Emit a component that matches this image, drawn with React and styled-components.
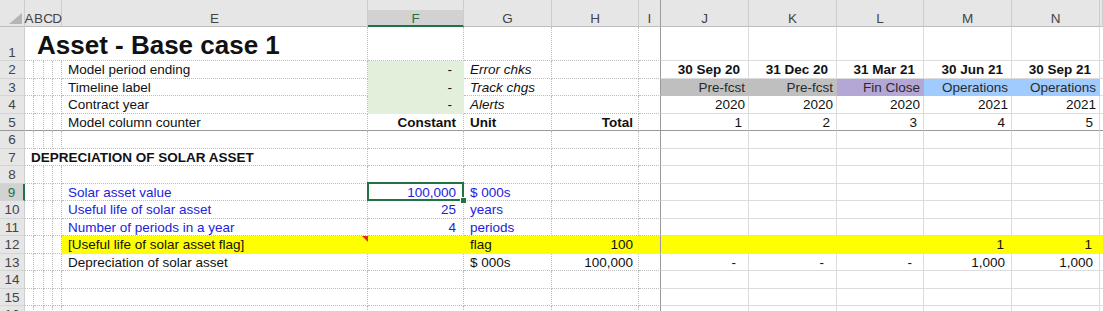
import React from "react";
import styled, { createGlobalStyle, css } from "styled-components";

const GlobalStyle = createGlobalStyle`
  html, body { margin: 0; padding: 0; background: #ffffff; overflow: hidden; }
  #root { width: 1103px; height: 311px; overflow: hidden; }
`;

const LETTERS = ["A", "B", "C", "D", "E", "F", "G", "H", "I", "J", "K", "L", "M", "N", "O"];
const WIDTHS = [9, 10, 9, 9, 306, 96, 88, 87, 22, 88, 88, 87, 88, 88, 3];
const RIGHT_PANE_START = 9; // index of J
const FREEZE_COL = 8; // I

const C = {
  header: "#e6e6e6",
  headerSel: "#d2d2d2",
  headerLine: "#cdcdcd",
  green: "#217346",
  dotted: "#bdbdbd",
  grid: "#dcdcdc",
  freeze: "#9a9a9a",
  text: "#111111",
  blue: "#2222dd",
  inputFill: "#e2efda",
  gray: "#bfbfbf",
  purple: "#b4a7d6",
  sky: "#9fcbff",
  yellow: "#ffff00",
};

const Sheet = styled.div`
  display: grid;
  grid-template-columns: 25px ${WIDTHS.map((w) => `${w}px`).join(" ")};
  grid-template-rows: 27px 34px repeat(16, 17.5px);
  width: 1103px;
  font-family: "Liberation Sans", Arial, sans-serif;
  color: ${C.text};
  background: #fff;
`;

const Corner = styled.div`
  box-sizing: border-box;
  background: ${C.header};
  border-right: 1px solid ${C.headerLine};
  border-bottom: 1px solid #bdbdbd;
  display: flex;
  align-items: flex-end;
  justify-content: flex-end;
  padding: 0 2px 2px 0;
`;

const ColHeader = styled.div`
  box-sizing: border-box;
  background: ${(p) =>
    p.$selected
      ? `linear-gradient(to bottom, ${C.header} 0, ${C.header} 10px, ${C.headerSel} 10px)`
      : C.header};
  border-right: 1px solid ${(p) => (p.$freeze ? C.freeze : p.$plain ? C.header : C.headerLine)};
  border-bottom: ${(p) => (p.$selected ? `2px solid ${C.green}` : "1px solid #bdbdbd")};
  display: flex;
  align-items: flex-end;
  justify-content: center;
  font-size: 13.5px;
  line-height: 13px;
  padding-bottom: ${(p) => (p.$selected ? "0" : "1px")};
  color: ${(p) => (p.$selected ? C.green : "#444")};
  white-space: nowrap;
  overflow: visible;
`;

const RowHeader = styled.div`
  box-sizing: border-box;
  background: ${(p) => (p.$selected ? C.headerSel : C.header)};
  border-right: ${(p) => (p.$selected ? `2px solid ${C.green}` : `1px solid ${C.headerLine}`)};
  border-bottom: 1px solid ${(p) => (p.$freeze ? C.freeze : "#d4d4d4")};
  display: flex;
  align-items: flex-end;
  justify-content: center;
  font-size: 13.5px;
  line-height: 15.5px;
  color: ${(p) => (p.$selected ? C.green : "#444")};
`;

const paneBorder = (p) => {
  if (p.$col === FREEZE_COL) return `1px solid ${C.freeze}`;
  if (p.$fill) return `1px solid ${p.$fill}`;
  if (p.$col >= RIGHT_PANE_START) return `1px solid ${C.grid}`;
  return `1px dotted ${C.dotted}`;
};

const bottomBorder = (p) => {
  if (p.$freezeRow) return `1px solid ${C.freeze}`;
  if (p.$fill) return `1px solid ${p.$fill}`;
  if (p.$col >= RIGHT_PANE_START) return `1px solid ${C.grid}`;
  return `1px dotted ${C.dotted}`;
};

const Cell = styled.div`
  box-sizing: border-box;
  position: relative;
  grid-column: span ${(p) => p.$span || 1};
  display: flex;
  align-items: flex-end;
  justify-content: ${(p) => (p.$align === "right" ? "flex-end" : "flex-start")};
  padding: 0 ${(p) => p.$pr ?? 3}px 0 ${(p) => p.$pl ?? 3}px;
  background: ${(p) => p.$fill || "#ffffff"};
  border-right: ${paneBorder};
  border-bottom: ${bottomBorder};
  font-size: ${(p) => p.$size || 13.5}px;
  line-height: ${(p) => (p.$size ? 30 : 15.5)}px;
  font-weight: ${(p) => (p.$bold ? 700 : 400)};
  font-style: ${(p) => (p.$italic ? "italic" : "normal")};
  color: ${(p) => p.$color || C.text};
  white-space: nowrap;
  overflow: visible;
  ${(p) =>
    p.$selected &&
    css`
      z-index: 2;
    `}
`;

const SelectionBox = styled.div`
  position: absolute;
  left: -1px;
  top: -2px;
  right: -1px;
  bottom: -1px;
  border: 2px solid ${C.green};
  pointer-events: none;
`;

const FillHandle = styled.div`
  position: absolute;
  right: -5px;
  bottom: -5px;
  width: 5px;
  height: 5px;
  background: ${C.green};
  border: 1px solid #ffffff;
`;

const CommentMark = styled.div`
  position: absolute;
  top: 0;
  right: -1px;
  width: 0;
  height: 0;
  border-top: 6px solid #e8281c;
  border-left: 6px solid transparent;
`;

/* ---- data ---- */
const E = { pl: 6 };
const dash = (extra = {}) => ({ text: "-", align: "right", pr: 11, ...extra });
const dates = ["30 Sep 20", "31 Dec 20", "31 Mar 21", "30 Jun 21", "30 Sep 21"];

const ROWS = [
  {
    n: 1,
    cells: {
      A: { text: "Asset - Base case 1", span: 5, pl: 12, bold: true, size: 26 },
    },
  },
  {
    n: 2,
    cells: {
      E: { ...E, text: "Model period ending" },
      F: dash({ fill: C.inputFill }),
      G: { text: "Error chks", italic: true, pl: 6 },
      ...Object.fromEntries(
        ["J", "K", "L", "M", "N"].map((k, i) => [k, { text: dates[i], bold: true, align: "right", pr: 8 }])
      ),
    },
  },
  {
    n: 3,
    cells: {
      E: { ...E, text: "Timeline label" },
      F: dash({ fill: C.inputFill }),
      G: { text: "Track chgs", italic: true, pl: 6 },
      J: { text: "Pre-fcst", align: "right", pr: 3, fill: C.gray, color: "#2a2a2a" },
      K: { text: "Pre-fcst", align: "right", pr: 3, fill: C.gray, color: "#2a2a2a" },
      L: { text: "Fin Close", align: "right", pr: 3, fill: C.purple, color: "#2a2a2a" },
      M: { text: "Operations", align: "right", pr: 3, fill: C.sky, color: "#2a2a2a" },
      N: { text: "Operations", align: "right", pr: 3, fill: C.sky, color: "#2a2a2a" },
    },
  },
  {
    n: 4,
    cells: {
      E: { ...E, text: "Contract year" },
      F: dash({ fill: C.inputFill }),
      G: { text: "Alerts", italic: true, pl: 6 },
      ...Object.fromEntries(
        ["J", "K", "L", "M", "N"].map((k, i) => [k, { text: i < 3 ? "2020" : "2021", align: "right", pr: 3 }])
      ),
    },
  },
  {
    n: 5,
    freeze: true,
    cells: {
      E: { ...E, text: "Model column counter" },
      F: { text: "Constant", bold: true, align: "right", pr: 7 },
      G: { text: "Unit", bold: true, pl: 6 },
      H: { text: "Total", bold: true, align: "right", pr: 5 },
      ...Object.fromEntries(
        ["J", "K", "L", "M", "N"].map((k, i) => [k, { text: String(i + 1), align: "right", pr: 6 }])
      ),
    },
  },
  { n: 6, cells: {} },
  {
    n: 7,
    cells: {
      A: { text: "DEPRECIATION OF SOLAR ASSET", span: 5, bold: true, pl: 6 },
    },
  },
  { n: 8, cells: {} },
  {
    n: 9,
    selected: true,
    cells: {
      E: { ...E, text: "Solar asset value", color: C.blue },
      F: { text: "100,000", align: "right", pr: 7, color: C.blue, selected: true },
      G: { text: "$ 000s", pl: 6, color: C.blue },
    },
  },
  {
    n: 10,
    cells: {
      E: { ...E, text: "Useful life of solar asset", color: C.blue },
      F: { text: "25", align: "right", pr: 7, color: C.blue },
      G: { text: "years", pl: 6, color: C.blue },
    },
  },
  {
    n: 11,
    cells: {
      E: { ...E, text: "Number of periods in a year", color: C.blue },
      F: { text: "4", align: "right", pr: 7, color: C.blue },
      G: { text: "periods", pl: 6, color: C.blue },
    },
  },
  {
    n: 12,
    fillFrom: 4,
    fill: C.yellow,
    cells: {
      E: { ...E, text: "[Useful life of solar asset flag]", comment: true },
      G: { text: "flag", pl: 6 },
      H: { text: "100", align: "right", pr: 5 },
      M: { text: "1", align: "right", pr: 7 },
      N: { text: "1", align: "right", pr: 7 },
    },
  },
  {
    n: 13,
    cells: {
      E: { ...E, text: "Depreciation of solar asset" },
      G: { text: "$ 000s", pl: 6 },
      H: { text: "100,000", align: "right", pr: 5 },
      J: dash({ pr: 12 }),
      K: dash({ pr: 12 }),
      L: dash({ pr: 11 }),
      M: { text: "1,000", align: "right", pr: 6 },
      N: { text: "1,000", align: "right", pr: 6 },
    },
  },
  { n: 14, cells: {} },
  { n: 15, cells: {} },
  { n: 16, cells: {} },
];

function SheetRow({ row }) {
  const out = [
    <RowHeader key="h" $selected={row.selected} $freeze={row.freeze}>
      {row.n}
    </RowHeader>,
  ];
  let skip = 0;
  LETTERS.forEach((letter, col) => {
    if (skip > 0) {
      skip -= 1;
      return;
    }
    const c = row.cells[letter] || {};
    const span = c.span || 1;
    skip = span - 1;
    const rowFill = row.fill && col >= row.fillFrom ? row.fill : undefined;
    out.push(
      <Cell
        key={letter}
        $col={col + span - 1}
        $span={span}
        $align={c.align}
        $pl={c.pl}
        $pr={c.pr}
        $bold={c.bold}
        $italic={c.italic}
        $color={c.color}
        $size={c.size}
        $fill={c.fill || rowFill}
        $freezeRow={row.freeze}
        $selected={c.selected}
      >
        {c.text}
        {c.comment && <CommentMark />}
        {c.selected && (
          <SelectionBox>
            <FillHandle />
          </SelectionBox>
        )}
      </Cell>
    );
  });
  return out;
}

export default function App() {
  return (
    <>
      <GlobalStyle />
      <Sheet>
        <Corner>
          <svg width="13" height="11" viewBox="0 0 13 11">
            <polygon points="13,0 13,11 0,11" fill="#b5b5b5" />
          </svg>
        </Corner>
        {LETTERS.map((l, i) => (
          <ColHeader
            key={l}
            $selected={l === "F"}
            $freeze={i === FREEZE_COL}
            $plain={i < 3}
          >
            {l === "O" ? "" : l}
          </ColHeader>
        ))}
        {ROWS.map((r) => (
          <SheetRow key={r.n} row={r} />
        ))}
      </Sheet>
    </>
  );
}
